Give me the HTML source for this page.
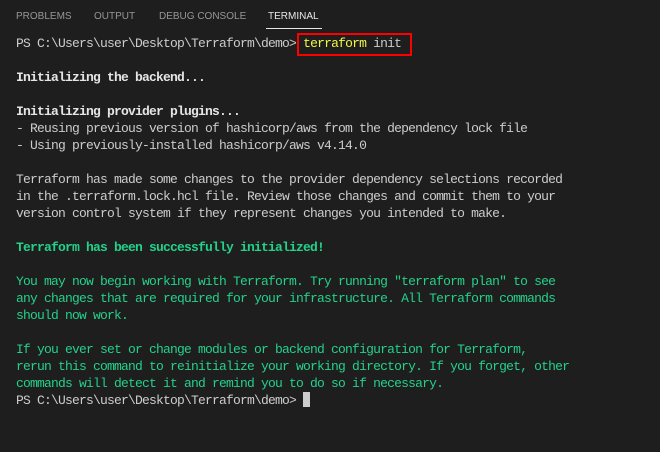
<!DOCTYPE html>
<html><head><meta charset="utf-8"><style>
html,body{margin:0;padding:0;background:#1e1e1e;width:660px;height:452px;overflow:hidden}
.tabs{position:absolute;top:0;left:0;height:30px;width:660px;font-family:"Liberation Sans",sans-serif;font-size:10px;color:#969696;white-space:nowrap}
.tabs span{position:absolute;top:11px}
.act{color:#e7e7e7}
.ul{position:absolute;left:266px;top:28px;width:56px;height:1px;background:#e7e7e7}
pre{position:absolute;left:16px;top:35px;margin:0;font-family:"Liberation Mono",monospace;font-size:13px;letter-spacing:-0.8px;line-height:17px;color:#cccccc}
b{font-weight:bold;color:#e5e5e5}
b.g{color:#23d18b}
.g{color:#23d18b}
.y{color:#f5f543}
.box{position:absolute;left:297px;top:33px;width:115px;height:23px;border:2px solid #f00;box-sizing:border-box}
.cur{display:inline-block;width:7px;height:15px;background:#cccccc;vertical-align:-3px}
</style></head><body>
<div class="tabs">
<span style="left:16px">PROBLEMS</span>
<span style="left:94px">OUTPUT</span>
<span style="left:159px">DEBUG CONSOLE</span>
<span class="act" style="left:268px">TERMINAL</span>
</div>
<div class="ul"></div>
<pre>PS C:\Users\user\Desktop\Terraform\demo&gt; <span class="y">terraform</span> init

<b>Initializing the backend...</b>

<b>Initializing provider plugins...</b>
- Reusing previous version of hashicorp/aws from the dependency lock file
- Using previously-installed hashicorp/aws v4.14.0

Terraform has made some changes to the provider dependency selections recorded
in the .terraform.lock.hcl file. Review those changes and commit them to your
version control system if they represent changes you intended to make.

<b class="g">Terraform has been successfully initialized!</b>
<span class="g">
You may now begin working with Terraform. Try running "terraform plan" to see
any changes that are required for your infrastructure. All Terraform commands
should now work.

If you ever set or change modules or backend configuration for Terraform,
rerun this command to reinitialize your working directory. If you forget, other
commands will detect it and remind you to do so if necessary.</span>
PS C:\Users\user\Desktop\Terraform\demo&gt; <span class="cur"></span></pre>
<div class="box"></div>
</body></html>
